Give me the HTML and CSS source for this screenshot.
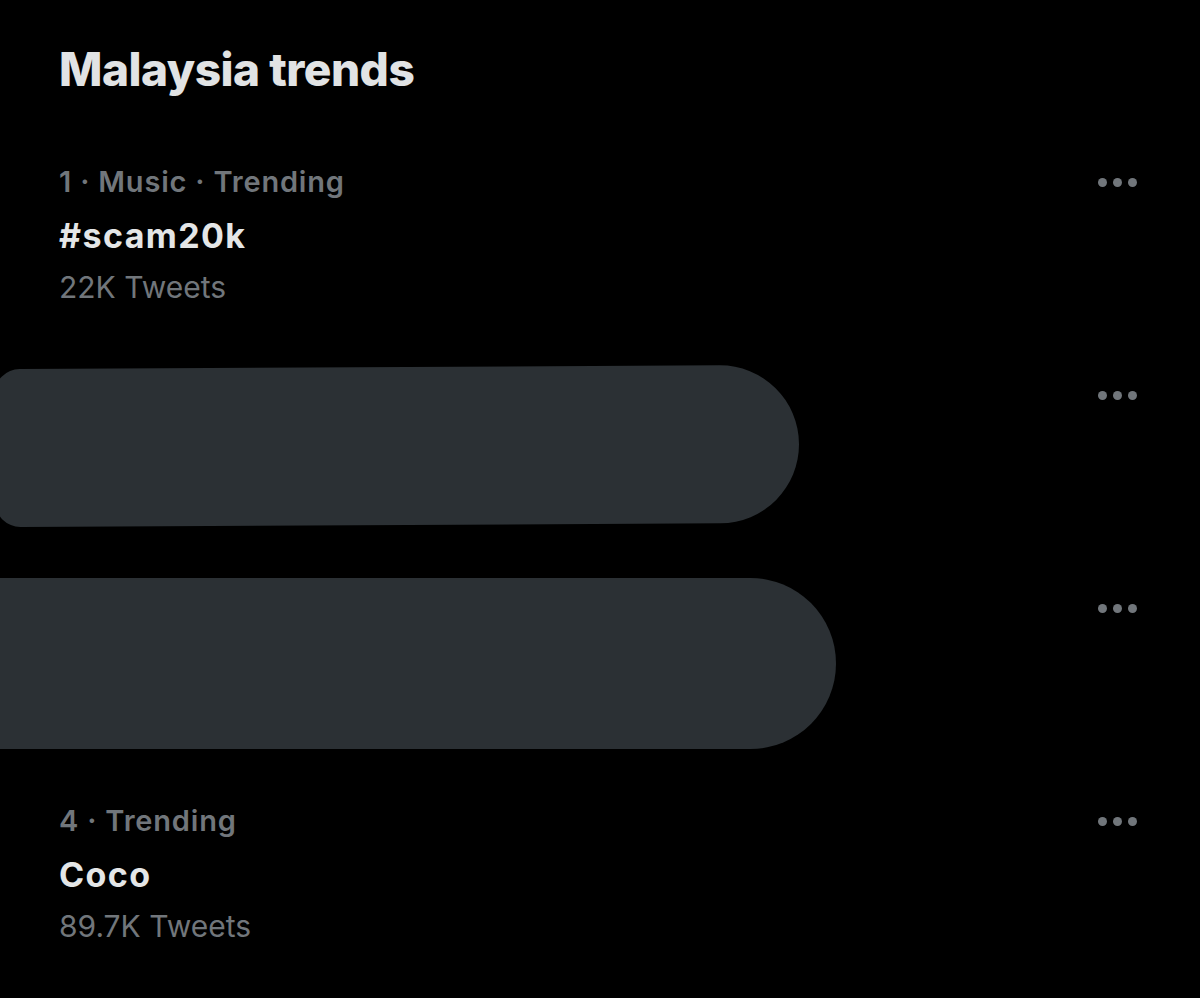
FILE: index.html
```html
<!DOCTYPE html>
<html lang="en">
<head>
<meta charset="utf-8">
<title>Malaysia trends</title>
<link rel="stylesheet" href="styles.css">
</head>
<body>
<main class="panel">
  <h1 class="title">Malaysia trends</h1>
  <ul class="trends">
    <li class="trend">
      <div class="info">
        <div class="meta">1 · Music · Trending</div>
        <div class="name">#scam20k</div>
        <div class="count">22K Tweets</div>
      </div>
      <div class="more"><span></span><span></span><span></span></div>
    </li>
    <li class="trend">
      <div class="redact redact-a"></div>
      <div class="info"></div>
      <div class="more"><span></span><span></span><span></span></div>
    </li>
    <li class="trend">
      <div class="redact redact-b"></div>
      <div class="info"></div>
      <div class="more"><span></span><span></span><span></span></div>
    </li>
    <li class="trend">
      <div class="info">
        <div class="meta">4 · Trending</div>
        <div class="name">Coco</div>
        <div class="count">89.7K Tweets</div>
      </div>
      <div class="more"><span></span><span></span><span></span></div>
    </li>
  </ul>
</main>
</body>
</html>
```

FILE: styles.css
```css
* { box-sizing: border-box; }
html, body {
  margin: 0;
  padding: 0;
  background: #000;
}
body {
  width: 1200px;
  height: 998px;
  overflow: hidden;
  font-family: Inter, "Liberation Sans", sans-serif;
}
.panel {
  padding: 41px 63px 0 59px;
}
.title {
  margin: 0 0 67px 0;
  font-size: 46px;
  line-height: 56px;
  font-weight: 800;
  color: #e1e3e4;
  letter-spacing: -0.5px;
}
.trends {
  list-style: none;
  margin: 0;
  padding: 0;
}
.trend {
  position: relative;
  height: 213px;
  display: flex;
  justify-content: space-between;
  align-items: flex-start;
}
.info {
  display: flex;
  flex-direction: column;
}
.meta {
  font-size: 29px;
  line-height: 36px;
  font-weight: 600;
  letter-spacing: 0.8px;
  color: #71767b;
}
.name {
  margin-top: 16px;
  font-size: 34px;
  line-height: 40px;
  font-weight: 700;
  letter-spacing: 1.4px;
  color: #e4e6e7;
}
.count {
  margin-top: 11px;
  font-size: 30px;
  line-height: 40px;
  font-weight: 400;
  color: #71767b;
}
.more {
  height: 36px;
  display: flex;
  align-items: center;
  gap: 6px;
}
.more span {
  width: 9px;
  height: 9px;
  border-radius: 50%;
  background: #71767b;
}
.redact {
  position: absolute;
  background: #2b3034;
}
.redact-a {
  top: -10px;
  left: -64px;
  width: 804px;
  height: 158px;
  border-radius: 25px 79px 79px 25px;
  transform: rotate(-0.3deg);
}
.redact-b {
  top: -12px;
  left: -79px;
  width: 856px;
  height: 171px;
  border-radius: 0 86px 86px 0;
}
```
